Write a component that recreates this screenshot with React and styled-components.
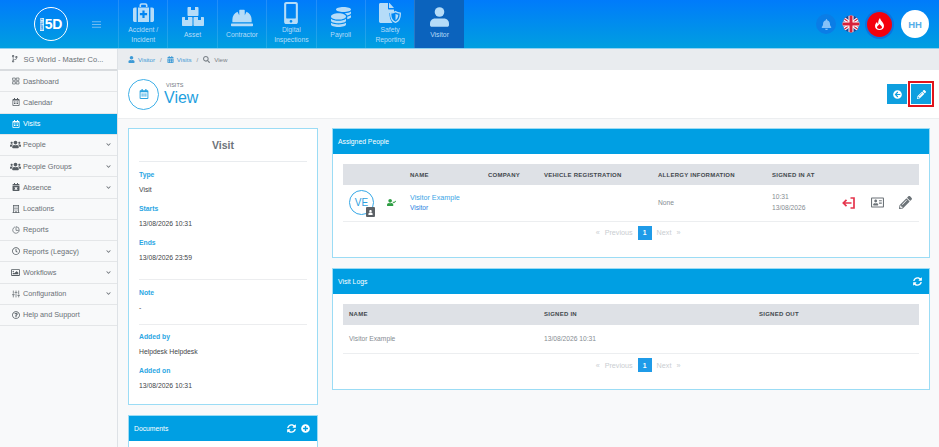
import React from 'react'
import styled, { createGlobalStyle } from 'styled-components'
import {
  FaHardHat, FaMobileAlt, FaCoins, FaUser, FaBell, FaCalendarAlt, FaSearch, FaArrowCircleLeft,
  FaPencilAlt, FaSyncAlt, FaPlusCircle, FaUserCheck, FaRegAddressCard, FaChevronDown, FaCodeBranch,
  FaRegCalendarAlt, FaUsers, FaCalendarTimes, FaRegBuilding, FaRegClock, FaRegImage, FaRegQuestionCircle,
} from 'react-icons/fa'
import { FiGrid, FiPieChart, FiSliders, FiMenu } from 'react-icons/fi'

const Global = createGlobalStyle`
  html, body { margin: 0; padding: 0; height: 100%; background: #f8f9fa; }
  body { font-family: "Liberation Sans", Arial, sans-serif; overflow: hidden; }
  * { box-sizing: border-box; }
`

const Page = styled.div`
  width: 939px;
  height: 447px;
  display: flex;
  flex-direction: column;
  overflow: hidden;
`

const TopBar = styled.header`
  height: 49px;
  flex: none;
  display: flex;
  background: linear-gradient(180deg, #007bfb 0%, #009fe0 100%);
  border-bottom: 1px solid #8fd0f0;
`

const Brand = styled.div`
  width: 118px;
  flex: none;
  display: flex;
  align-items: center;
  padding-left: 34px;
  gap: 23px;
  color: #7cc0f2;
  font-size: 11px;
`

const Logo = styled.div`
  width: 34px;
  height: 34px;
  border-radius: 50%;
  border: 1.5px solid #fff;
  color: #fff;
  font-size: 14px;
  font-weight: 700;
  display: flex;
  align-items: center;
  justify-content: center;
  gap: 1px;
  letter-spacing: -0.3px;
`

const LogoTag = styled.span`
  writing-mode: vertical-rl;
  transform: rotate(180deg);
  background: #d6ecfb;
  color: #1a8fe8;
  font-size: 3px;
  line-height: 4px;
  letter-spacing: 0;
  height: 13px;
  width: 4px;
  text-align: center;
  font-weight: 700;
  overflow: hidden;
`

const NavItem = styled.div`
  width: 49.4px;
  flex: none;
  height: 48px;
  border-left: 1px solid rgba(255, 255, 255, 0.13);
  background: ${(p) => (p.$active ? '#0b63bd' : 'transparent')};
  color: #b5dcf8;
  font-size: 6.8px;
  line-height: 10.5px;
  text-align: center;
  display: flex;
  flex-direction: column;
  align-items: center;
  padding-top: ${(p) => (p.$single ? '7px' : '2px')};
`

const NavIcon = styled.div`
  height: 22.5px;
  font-size: ${(p) => p.$size || 20}px;
  display: flex;
  align-items: ${(p) => (p.$single ? 'flex-start' : 'center')};
  justify-content: center;
  color: #b5dcf8;
`

const TopRight = styled.div`
  margin-left: auto;
  display: flex;
  align-items: center;
  padding-right: 10px;
  gap: 6px;
`

const BellWrap = styled.div`
  width: 20px;
  height: 20px;
  border-radius: 50%;
  background: #0a7de6;
  color: #86c2f8;
  font-size: 11px;
  display: flex;
  align-items: center;
  justify-content: center;
`

const Drop = styled.div`
  width: 25px;
  height: 25px;
  border-radius: 50%;
  background: #f4000c;
  box-shadow: 0 0 0 2px #0a72e0;
  display: flex;
  align-items: center;
  justify-content: center;
  margin: 0 3px 0 1px;
`

const Avatar = styled.div`
  width: 28px;
  height: 28px;
  border-radius: 50%;
  background: #fff;
  color: #55aee8;
  font-size: 9.5px;
  font-weight: 700;
  display: flex;
  align-items: center;
  justify-content: center;
`

const Body = styled.div`
  flex: 1;
  display: flex;
  min-height: 0;
`

const Side = styled.aside`
  width: 118px;
  flex: none;
  background: #f8f9fa;
  border-right: 1px solid #dee2e6;
  font-size: 7.3px;
  color: #6a7076;
`

const Company = styled.div`
  height: 22px;
  display: flex;
  align-items: center;
  padding-left: 11px;
  gap: 5px;
  border-bottom: 2px solid #d9dcdf;
  font-size: 7.5px;
`

const SideRow = styled.div`
  height: 21.25px;
  display: flex;
  align-items: center;
  padding: 0 6px 0 10px;
  border-bottom: 1px solid #e4e6e8;
  background: ${(p) => (p.$active ? '#009fe3' : 'transparent')};
  color: ${(p) => (p.$active ? '#fff' : '#6a7076')};
`

const SideIcon = styled.span`
  width: 11px;
  margin-right: 2px;
  font-size: ${(p) => p.$size || 8}px;
  display: flex;
  justify-content: center;
  color: ${(p) => (p.$active ? '#fff' : '#565d63')};
`

const Chevron = styled(FaChevronDown)`
  margin-left: auto;
  font-size: 5px;
  color: #6a7076;
`

const Main = styled.main`
  flex: 1;
  min-width: 0;
  display: flex;
  flex-direction: column;
`

const Crumbs = styled.div`
  height: 21px;
  flex: none;
  background: #e9ecef;
  display: flex;
  align-items: center;
  padding-left: 10px;
  font-size: 6.2px;
  color: #3d9ad6;
  gap: 3px;
  svg { font-size: 7px; }
`

const CrumbSep = styled.span`
  color: #868e96;
  margin: 0 2px;
`

const CrumbLast = styled.span`
  color: #7b8288;
  display: flex;
  align-items: center;
  gap: 4px;
`

const Head = styled.div`
  height: 49px;
  flex: none;
  background: #fff;
  border-bottom: 1px solid #eceef0;
  display: flex;
  align-items: center;
  padding: 0 5px 0 10px;
`

const HeadCircle = styled.div`
  width: 31px;
  height: 31px;
  border-radius: 50%;
  border: 1.5px solid #3fb0e8;
  color: #2aa3e0;
  font-size: 10px;
  display: flex;
  align-items: center;
  justify-content: center;
  margin-right: 5px;
`

const HeadTitle = styled.div`
  display: flex;
  flex-direction: column;
  color: #1f9fe0;
  font-size: 16px;
  line-height: 17px;
`

const HeadSmall = styled.span`
  font-size: 5.5px;
  line-height: 7px;
  color: #70767c;
  margin-left: 2px;
`

const HeadActions = styled.div`
  margin-left: auto;
  display: flex;
  align-items: center;
  gap: 1px;
`

const ActionBtn = styled.button`
  width: 20px;
  height: 20px;
  border: 0;
  padding: 0;
  background: #0e9fdf;
  color: #fff;
  font-size: 9px;
  display: flex;
  align-items: center;
  justify-content: center;
`

const EditOutline = styled.div`
  padding: 1px;
  border: 2.5px solid #e0141c;
  margin: -4px 0;
`

const Content = styled.div`
  flex: 1;
  min-height: 0;
  display: grid;
  grid-template-columns: 190px 598px;
  gap: 14px;
  padding: 9px 0 0 10px;
  overflow: hidden;
`

const Column = styled.div`
  display: flex;
  flex-direction: column;
  gap: 10px;
`

const Card = styled.section`
  background: #fff;
  border: 1px solid #9bdcf5;
  flex: none;
`

const VisitCard = styled(Card)`
  height: 277px;
  padding: 0 10px;
`

const VisitTitle = styled.div`
  height: 33px;
  display: flex;
  align-items: center;
  justify-content: center;
  color: #6d7379;
  font-size: 10.5px;
  font-weight: 700;
  border-bottom: 1px solid #e9ecef;
  margin-bottom: 8px;
`

const FieldLabel = styled.div`
  color: #2ba6e3;
  font-size: 6.8px;
  font-weight: 700;
  line-height: 10px;
`

const FieldValue = styled.div`
  color: #3f4549;
  font-size: 6.8px;
  line-height: 10px;
  margin: 5px 0 ${(p) => p.$gap || 9}px;
`

const Rule = styled.div`
  height: 1px;
  background: #ecedef;
  margin: 0 0 ${(p) => p.$after || 8}px;
`

const CardBar = styled.div`
  height: 25px;
  background: #009fe3;
  color: #fff;
  font-size: 6.8px;
  display: flex;
  align-items: center;
  justify-content: space-between;
  padding: 0 7px 0 5px;
`

const BarIcons = styled.div`
  display: flex;
  gap: 5px;
  font-size: 9px;
  align-items: center;
`

const DocBody = styled.div`
  height: 30px;
`

const TableWrap = styled.div`
  padding: 10px 10px 17px;
`

const Table = styled.table`
  width: 100%;
  border-collapse: collapse;
  table-layout: fixed;
  font-size: 6.7px;
`

const Th = styled.th`
  background: #dee1e6;
  color: #43484d;
  font-size: 6px;
  font-weight: 700;
  letter-spacing: 0.25px;
  text-align: left;
  height: 21px;
  padding: 0 0 0 ${(p) => p.$pad || 0}px;
  white-space: nowrap;
`

const Td = styled.td`
  height: ${(p) => p.$h || 36}px;
  color: #868c92;
  padding: 0 0 0 ${(p) => p.$pad || 0}px;
  border-bottom: 1px solid #eceef0;
  line-height: 10.5px;
`

const PersonCell = styled.div`
  display: flex;
  align-items: center;
  padding-left: 6px;
  gap: 13px;
  color: #2f9e44;
  font-size: 9px;
`

const Initials = styled.div`
  position: relative;
  width: 25px;
  height: 25px;
  border-radius: 50%;
  border: 1px solid #35a7e6;
  color: #2f9fe0;
  font-size: 10px;
  display: flex;
  align-items: center;
  justify-content: center;
`

const PersonBadge = styled.span`
  position: absolute;
  right: -2px;
  bottom: -3px;
  width: 9px;
  height: 10px;
  border-radius: 1px;
  background: #5c6166;
  color: #fff;
  font-size: 5px;
  display: flex;
  align-items: center;
  justify-content: center;
`

const NameLink = styled.div`
  color: #3da5e6;
  font-size: 7.2px;
  padding-top: 1px;
`

const Role = styled.div`
  color: #1f7fdf;
  font-size: 6.6px;
`

const RowIcons = styled.div`
  display: flex;
  align-items: center;
  justify-content: space-between;
  padding: 0 7px 0 2px;
  font-size: 13px;
`

const Pager = styled.div`
  display: flex;
  align-items: center;
  justify-content: center;
  gap: 5px;
  color: #c9cdd1;
  font-size: 7.2px;
  height: 14px;
  margin-top: 4px;
  padding-left: 14px;
`

const PageNum = styled.span`
  width: 14px;
  height: 14px;
  background: #1f9be8;
  color: #fff;
  font-size: 6.8px;
  font-weight: 700;
  display: flex;
  align-items: center;
  justify-content: center;
`

function MedicalIcon() {
  return (
    <svg width="21" height="20" viewBox="0 0 21 20" fill="currentColor">
      <path d="M6.5 4V2.2C6.5 1 7.4.2 8.6.2h3.8c1.2 0 2.1.8 2.1 2V4h-1.6V2.4c0-.4-.2-.6-.6-.6H8.7c-.4 0-.6.2-.6.6V4z" />
      <path d="M1.8 4.5H3.6V19H1.8C.8 19 0 18.2 0 17.2V6.3C0 5.3.8 4.5 1.8 4.5zM17.4 4.5h1.8c1 0 1.8.8 1.8 1.8v10.9c0 1-.8 1.8-1.8 1.8h-1.8z" />
      <path fillRule="evenodd" d="M5 4.5h11V19H5zM9.4 7.5v2.6H6.9v2.2h2.5v2.6h2.2v-2.6h2.5v-2.2h-2.5V7.5z" />
    </svg>
  )
}

function AssetIcon() {
  return (
    <svg width="22" height="19" viewBox="0 0 22 19" fill="currentColor">
      <path d="M6.5 0H9v3h4V0h2.5c.6 0 1 .4 1 1v7c0 .6-.4 1-1 1h-9c-.6 0-1-.4-1-1V1c0-.6.4-1 1-1z" />
      <path d="M1 10h2v3h3v-3h3.5c.6 0 1 .4 1 1v7c0 .6-.4 1-1 1H1c-.6 0-1-.4-1-1v-7c0-.6.4-1 1-1z" />
      <path d="M12.5 10H16v3h3v-3h2c.6 0 1 .4 1 1v7c0 .6-.4 1-1 1h-8.5c-.6 0-1-.4-1-1v-7c0-.6.4-1 1-1z" />
    </svg>
  )
}

function SafetyIcon() {
  return (
    <svg width="22" height="20" viewBox="0 0 22 20" fill="currentColor">
      <path d="M1.5 0H9v5.500c0 .6.4 1 1 1h5V9c-2 .8-3.5 1-4.5 1.100-.1 3.500.6 6.900 3 9.900h-11C.6 20 0 19.400 0 18.500v-17C0 .6.6 0 1.500 0zM10.500 0L15 5h-5V0z" />
      <path fill="none" stroke="currentColor" strokeWidth="1.3" d="M16.500 8.600c1.500 1 3 1.400 4.800 1.500.2 4.300-1.300 7.900-4.800 9.200-3.500-1.300-5-4.900-4.800-9.200 1.800-.1 3.300-.5 4.800-1.500z" />
      <path d="M16.500 10.800c.9.600 1.700.8 2.800 1-.1 2.500-1 4.300-2.800 5.500z" />
    </svg>
  )
}

function VisitorIcon() {
  return (
    <svg width="19" height="20" viewBox="0 0 19 20" fill="currentColor">
      <circle cx="9.5" cy="5" r="4.8" />
      <path d="M5 11.500h9c2.800 0 5 2.200 5 5V18c0 1-.8 1.800-1.800 1.800H1.800C.8 19.800 0 19 0 18v-1.500c0-2.800 2.200-5 5-5z" />
    </svg>
  )
}

function SignInIcon() {
  return (
    <svg width="13" height="12" viewBox="0 0 13 12" fill="none" stroke="#e5344c" strokeWidth="1.7">
      <path d="M8.500 1H12V11H8.500" />
      <path d="M9.500 6H1.500M4.500 2.800L1.300 6L4.500 9.200" />
    </svg>
  )
}

const nav = [
  { label: ['Accident /', 'Incident'], icon: <MedicalIcon /> },
  { label: ['Asset'], icon: <AssetIcon /> },
  { label: ['Contractor'], icon: <FaHardHat />, size: 22 },
  { label: ['Digital', 'Inspections'], icon: <FaMobileAlt />, size: 22 },
  { label: ['Payroll'], icon: <FaCoins />, size: 20 },
  { label: ['Safety', 'Reporting'], icon: <SafetyIcon /> },
  { label: ['Visitor'], icon: <VisitorIcon />, active: true },
]

const menu = [
  { label: 'Dashboard', icon: <FiGrid /> },
  { label: 'Calendar', icon: <FaRegCalendarAlt /> },
  { label: 'Visits', icon: <FaRegCalendarAlt />, active: true },
  { label: 'People', icon: <FaUsers />, size: 11, more: true },
  { label: 'People Groups', icon: <FaUsers />, size: 11, more: true },
  { label: 'Absence', icon: <FaCalendarTimes />, more: true },
  { label: 'Locations', icon: <FaRegBuilding /> },
  { label: 'Reports', icon: <FiPieChart /> },
  { label: 'Reports (Legacy)', icon: <FaRegClock />, more: true },
  { label: 'Workflows', icon: <FaRegImage />, size: 9, more: true },
  { label: 'Configuration', icon: <FiSliders />, more: true },
  { label: 'Help and Support', icon: <FaRegQuestionCircle /> },
]

function Flag() {
  return (
    <svg width="18" height="18" viewBox="0 0 18 18">
      <defs>
        <clipPath id="flagclip"><circle cx="9" cy="9" r="8.5" /></clipPath>
      </defs>
      <g clipPath="url(#flagclip)">
        <rect width="18" height="18" fill="#27408f" />
        <path d="M0 2 L18 16 M18 2 L0 16" stroke="#fff" strokeWidth="3.4" />
        <path d="M0 2 L18 16 M18 2 L0 16" stroke="#d8213a" strokeWidth="1.2" />
        <path d="M9 0 V18 M0 9 H18" stroke="#fff" strokeWidth="5" />
        <path d="M9 0 V18 M0 9 H18" stroke="#d8213a" strokeWidth="3" />
      </g>
    </svg>
  )
}

function Pagination() {
  return (
    <Pager>
      <span>«</span>
      <span>Previous</span>
      <PageNum>1</PageNum>
      <span>Next</span>
      <span>»</span>
    </Pager>
  )
}

export default function App() {
  return (
    <Page>
      <Global />
      <TopBar>
        <Brand>
          <Logo><LogoTag>SAFETY</LogoTag>5D</Logo>
          <FiMenu />
        </Brand>
        {nav.map((n) => (
          <NavItem key={n.label[0]} $active={n.active} $single={n.label.length === 1}>
            <NavIcon $single={n.label.length === 1} $size={n.size}>{n.icon}</NavIcon>
            {n.label.map((l) => <span key={l}>{l}</span>)}
          </NavItem>
        ))}
        <TopRight>
          <BellWrap><FaBell /></BellWrap>
          <Flag />
          <Drop>
            <svg width="11" height="14" viewBox="0 0 11 14">
              <path d="M6 1 C6.5 4 10 5.5 10 9 C10 11.5 8 13 5.5 13 C3 13 1 11.5 1 9 C1 7 2 6 3 5 C3.2 6 3.6 6.6 4.2 7 C4 5 4.6 2.5 6 1 Z M5.5 7 C4.5 8.5 3 9.2 3 10.3 C3 11.3 4.2 11.9 5.5 11.9 C6.8 11.9 8 11.3 8 10.3 C8 9.2 6.500 8.500 5.500 7 Z" fill="#fff" fillRule="evenodd" />
            </svg>
          </Drop>
          <Avatar>HH</Avatar>
        </TopRight>
      </TopBar>
      <Body>
        <Side>
          <Company><FaCodeBranch />SG World - Master Co...</Company>
          {menu.map((m) => (
            <SideRow key={m.label} $active={m.active}>
              <SideIcon $active={m.active} $size={m.size}>{m.icon}</SideIcon>
              {m.label}
              {m.more && <Chevron />}
            </SideRow>
          ))}
        </Side>
        <Main>
          <Crumbs>
            <FaUser /><span>Visitor</span><CrumbSep>/</CrumbSep>
            <FaCalendarAlt /><span>Visits</span><CrumbSep>/</CrumbSep>
            <CrumbLast><FaSearch />View</CrumbLast>
          </Crumbs>
          <Head>
            <HeadCircle><FaRegCalendarAlt /></HeadCircle>
            <HeadTitle>
              <HeadSmall>VISITS</HeadSmall>
              View
            </HeadTitle>
            <HeadActions>
              <ActionBtn><FaArrowCircleLeft /></ActionBtn>
              <EditOutline><ActionBtn><FaPencilAlt /></ActionBtn></EditOutline>
            </HeadActions>
          </Head>
          <Content>
            <Column>
              <VisitCard>
                <VisitTitle>Visit</VisitTitle>
                <FieldLabel>Type</FieldLabel>
                <FieldValue>Visit</FieldValue>
                <FieldLabel>Starts</FieldLabel>
                <FieldValue>13/08/2026 10:31</FieldValue>
                <FieldLabel>Ends</FieldLabel>
                <FieldValue $gap={16}>13/08/2026 23:59</FieldValue>
                <Rule />
                <FieldLabel>Note</FieldLabel>
                <FieldValue $gap={11}>-</FieldValue>
                <Rule $after={7} />
                <FieldLabel>Added by</FieldLabel>
                <FieldValue>Helpdesk Helpdesk</FieldValue>
                <FieldLabel>Added on</FieldLabel>
                <FieldValue>13/08/2026 10:31</FieldValue>
              </VisitCard>
              <Card>
                <CardBar>
                  Documents
                  <BarIcons><FaSyncAlt /><FaPlusCircle /></BarIcons>
                </CardBar>
                <DocBody />
              </Card>
            </Column>
            <Column>
              <Card>
                <CardBar>Assigned People</CardBar>
                <TableWrap>
                  <Table>
                    <colgroup>
                      <col style={{ width: 67 }} />
                      <col style={{ width: 78 }} />
                      <col style={{ width: 56 }} />
                      <col style={{ width: 114 }} />
                      <col style={{ width: 114 }} />
                      <col style={{ width: 68 }} />
                      <col />
                    </colgroup>
                    <thead>
                      <tr>
                        <Th />
                        <Th>NAME</Th>
                        <Th>COMPANY</Th>
                        <Th>VEHICLE REGISTRATION</Th>
                        <Th>ALLERGY INFORMATION</Th>
                        <Th>SIGNED IN AT</Th>
                        <Th />
                      </tr>
                    </thead>
                    <tbody>
                      <tr>
                        <Td>
                          <PersonCell>
                            <Initials>VE<PersonBadge><FaUser /></PersonBadge></Initials>
                            <FaUserCheck />
                          </PersonCell>
                        </Td>
                        <Td>
                          <NameLink>Visitor Example</NameLink>
                          <Role>Visitor</Role>
                        </Td>
                        <Td />
                        <Td />
                        <Td>None</Td>
                        <Td>10:31<br />13/08/2026</Td>
                        <Td>
                          <RowIcons>
                            <SignInIcon />
                            <FaRegAddressCard color="#6c7378" />
                            <FaPencilAlt color="#6c7378" />
                          </RowIcons>
                        </Td>
                      </tr>
                    </tbody>
                  </Table>
                  <Pagination />
                </TableWrap>
              </Card>
              <Card>
                <CardBar>
                  Visit Logs
                  <BarIcons><FaSyncAlt /></BarIcons>
                </CardBar>
                <TableWrap>
                  <Table>
                    <colgroup>
                      <col style={{ width: 195 }} />
                      <col style={{ width: 215 }} />
                      <col />
                    </colgroup>
                    <thead>
                      <tr>
                        <Th $pad={6}>NAME</Th>
                        <Th $pad={6}>SIGNED IN</Th>
                        <Th $pad={6}>SIGNED OUT</Th>
                      </tr>
                    </thead>
                    <tbody>
                      <tr>
                        <Td $h={29} $pad={6}>Visitor Example</Td>
                        <Td $h={29} $pad={6}>13/08/2026 10:31</Td>
                        <Td $h={29} />
                      </tr>
                    </tbody>
                  </Table>
                  <Pagination />
                </TableWrap>
              </Card>
            </Column>
          </Content>
        </Main>
      </Body>
    </Page>
  )
}
